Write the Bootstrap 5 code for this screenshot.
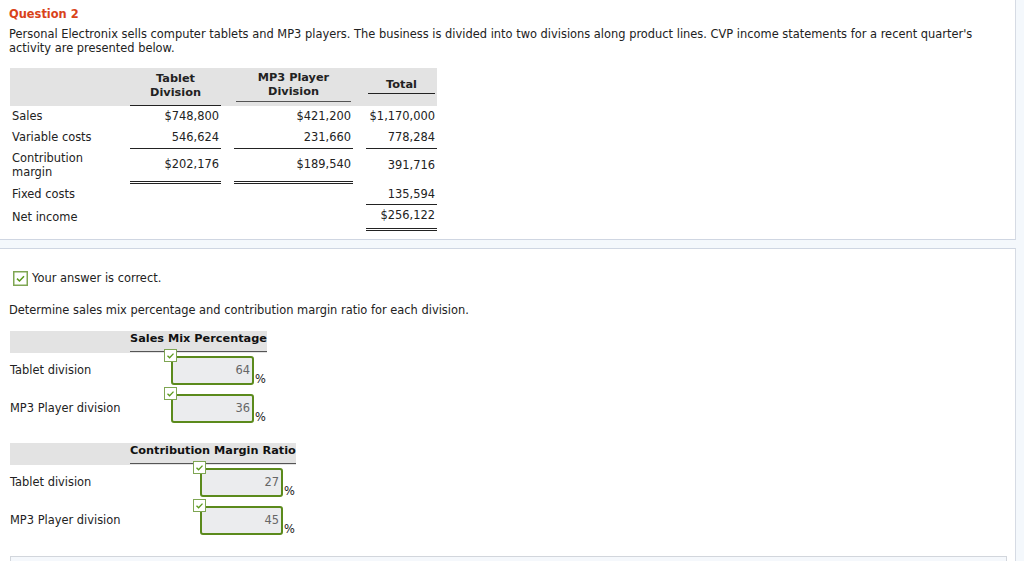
<!DOCTYPE html>
<html lang="en">
<head>
<meta charset="utf-8">
<title>Question 2</title>
<link href="https://cdn.jsdelivr.net/npm/bootstrap@5.3.0/dist/css/bootstrap.min.css" rel="stylesheet">
<style>
html,body{height:561px;overflow:hidden}
body{background:#f4f8fc;font-family:"DejaVu Sans",Verdana,sans-serif;font-size:11.43px;line-height:14px;color:#222}
.sheet{background:#fff;width:1016px;border-right:1px solid #d6dbe4;border-bottom:1px solid #cfd6e2}
.sheet-top{height:240px;padding:7px 10px 0 9px}
.sheet-main{height:313px;margin-top:8px;border-top:1px solid #cfd6e2;border-bottom:0;padding:0 9px;overflow:hidden}
.qtitle{color:#d9431a;font-weight:700;font-size:11.43px;margin:0 0 6px;line-height:14px}
.qtext{margin:0;width:990px}
.money{border-collapse:collapse;table-layout:fixed;width:427px;margin:13px 0 0 1px}
.money td,.money th{padding:0 2px;text-align:right;vertical-align:middle}
.money td:first-child{text-align:left}
.money th{text-align:center;font-weight:700;color:#222;font-size:11.3px}
.money .gap{padding:0}
.hd{background:#e3e3e3;height:38px}
.money .hd th{vertical-align:top}
.rule-t{display:block;padding-top:4px;height:38px;border-bottom:1px solid #222}
.rule-m{display:block;padding-top:3px;height:34px;border-bottom:1px solid #555}
.rule-o{display:block;padding-top:10px;height:26px;border-bottom:1px solid #222}
.r1{height:20px}
.r2{height:22px}
.r3{height:34px}
.r4{height:22px}
.r5{height:25px}
.money .r4 td{padding-top:2px}
.money td.one{border-bottom:1px solid #222}
.money td.dbl{border-bottom:3px double #222;padding-bottom:2px}
.okline{display:flex;align-items:center;gap:4px;margin:21px 0 0 4px;height:16px}
.okbox{display:block;width:15px;height:15px;flex:none}
.ask{margin:17px 0 0;line-height:14px}
.ansgrid{display:grid;align-items:start;grid-template-columns:120px 1fr}
.mixgrid{width:257px;margin:14px 0 0 1px}
.cmgrid{width:286px;margin:14px 0 0 1px}
.ansband{background:#e3e3e3;height:22px;grid-column:1/3;display:grid;grid-template-columns:120px 1fr}
.anshead{grid-column:2;font-weight:700;font-size:11.3px;color:#111;height:21px;padding-top:1px;border-bottom:1px solid #555;white-space:nowrap;line-height:14px}
.anslabel{height:38px;padding-top:10px}
.ansval{height:38px;display:flex;justify-content:flex-end;align-items:flex-start;position:relative;padding-top:3px}
.ansinput{width:83px;height:29px;border:2px solid #5b8a1c;border-radius:3px;background:#ebecee;color:#666;text-align:right;font:11.43px "DejaVu Sans",Verdana,sans-serif;padding:0 2px 1px 0;outline:0}
.pct{width:13px;flex:none;padding:16px 0 0 1px;color:#222;line-height:14px}
.tick{position:absolute;top:-4px;right:90px;width:13px;height:13px}
.nextpanel{background:#f5f8fc;border-top:1px solid #d2d6dc;border-left:1px solid #d2d6dc;border-right:1px solid #d2d6dc;width:997px;height:10px;margin:15px 0 0 1px}
</style>
</head>
<body>
<section class="sheet sheet-top">
  <h2 class="qtitle">Question 2</h2>
  <p class="qtext">Personal Electronix sells computer tablets and MP3 players. The business is divided into two divisions along product lines. CVP income statements for a recent quarter's activity are presented below.</p>
  <table class="money">
    <colgroup><col style="width:120px"><col style="width:91px"><col style="width:13px"><col style="width:119px"><col style="width:13px"><col style="width:71px"></colgroup>
    <tr class="hd"><th></th><th class="px-0"><span class="rule-t">Tablet<br>Division</span></th><th class="gap"></th><th><span class="rule-m">MP3 Player<br>Division</span></th><th class="gap"></th><th><span class="rule-o">Total</span></th></tr>
    <tr class="r1"><td>Sales</td><td>$748,800</td><td class="gap"></td><td>$421,200</td><td class="gap"></td><td>$1,170,000</td></tr>
    <tr class="r2"><td>Variable costs</td><td class="one">546,624</td><td class="gap"></td><td class="one">231,660</td><td class="gap"></td><td class="one">778,284</td></tr>
    <tr class="r3"><td>Contribution<br>margin</td><td class="dbl">$202,176</td><td class="gap"></td><td class="dbl">$189,540</td><td class="gap"></td><td>391,716</td></tr>
    <tr class="r4"><td>Fixed costs</td><td></td><td class="gap"></td><td></td><td class="gap"></td><td class="one">135,594</td></tr>
    <tr class="r5"><td>Net income</td><td></td><td class="gap"></td><td></td><td class="gap"></td><td class="dbl">$256,122</td></tr>
  </table>
</section>
<section class="sheet sheet-main">
  <div class="okline">
    <svg class="okbox" viewBox="0 0 15 15" aria-hidden="true"><rect x=".75" y=".75" width="13.5" height="13.5" fill="#fff" stroke="#7fa653" stroke-width="1.5"/><path d="M4 7.6 6.5 10 11 5.2" fill="none" stroke="#5b9a1c" stroke-width="1.5"/></svg>
    <span>Your answer is correct.</span>
  </div>
  <p class="ask">Determine sales mix percentage and contribution margin ratio for each division.</p>
  <div class="ansgrid mixgrid">
    <div class="ansband"><div class="anshead">Sales Mix Percentage</div></div>
    <div class="anslabel">Tablet division</div>
    <div class="ansval">
      <svg class="tick" viewBox="0 0 13 13" aria-hidden="true"><rect x=".5" y=".5" width="12" height="12" fill="#fff" stroke="#7fa653"/><path d="M3.5 6.7 5.6 8.8 9.5 4.6" fill="none" stroke="#5b9a1c" stroke-width="1.3"/></svg>
      <input class="ansinput" value="64" disabled><span class="pct">%</span>
    </div>
    <div class="anslabel">MP3 Player division</div>
    <div class="ansval">
      <svg class="tick" viewBox="0 0 13 13" aria-hidden="true"><rect x=".5" y=".5" width="12" height="12" fill="#fff" stroke="#7fa653"/><path d="M3.5 6.7 5.6 8.8 9.5 4.6" fill="none" stroke="#5b9a1c" stroke-width="1.3"/></svg>
      <input class="ansinput" value="36" disabled><span class="pct">%</span>
    </div>
  </div>
  <div class="ansgrid cmgrid">
    <div class="ansband"><div class="anshead">Contribution Margin Ratio</div></div>
    <div class="anslabel">Tablet division</div>
    <div class="ansval">
      <svg class="tick" viewBox="0 0 13 13" aria-hidden="true"><rect x=".5" y=".5" width="12" height="12" fill="#fff" stroke="#7fa653"/><path d="M3.5 6.7 5.6 8.8 9.5 4.6" fill="none" stroke="#5b9a1c" stroke-width="1.3"/></svg>
      <input class="ansinput" value="27" disabled><span class="pct">%</span>
    </div>
    <div class="anslabel">MP3 Player division</div>
    <div class="ansval">
      <svg class="tick" viewBox="0 0 13 13" aria-hidden="true"><rect x=".5" y=".5" width="12" height="12" fill="#fff" stroke="#7fa653"/><path d="M3.5 6.7 5.6 8.8 9.5 4.6" fill="none" stroke="#5b9a1c" stroke-width="1.3"/></svg>
      <input class="ansinput" value="45" disabled><span class="pct">%</span>
    </div>
  </div>
  <div class="nextpanel"></div>
</section>
<script src="https://cdn.jsdelivr.net/npm/bootstrap@5.3.0/dist/js/bootstrap.bundle.min.js"></script>
</body>
</html>
